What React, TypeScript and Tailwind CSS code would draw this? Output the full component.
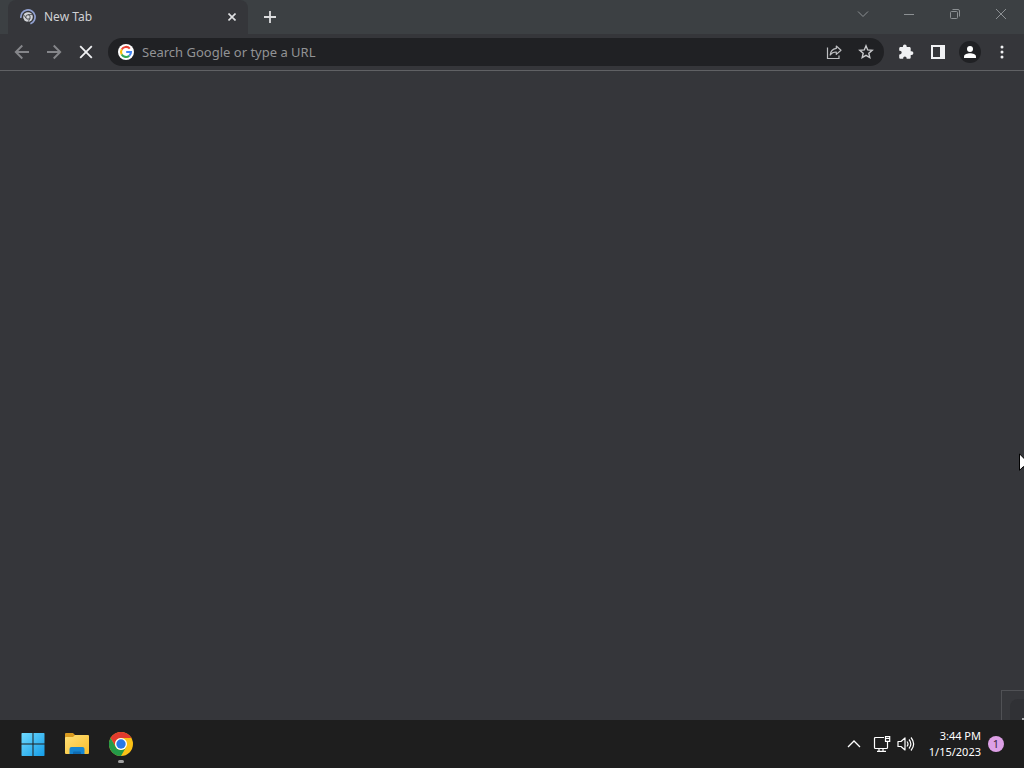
import type { ReactNode } from "react";

type IconButtonProps = { label: string; className?: string; children: ReactNode };

function IconButton({ label, className = "", children }: IconButtonProps) {
  return (
    <button type="button" aria-label={label} className={`flex shrink-0 items-center justify-center ${className}`}>
      {children}
    </button>
  );
}

function LoadingFavicon() {
  return (
    <svg width="16" height="16" viewBox="0 0 16 16" fill="none" aria-hidden="true">
      <circle cx="8" cy="8" r="4.8" fill="#d4d6da" />
      <path d="M8 5.6h4.200M5.900 9.200 3.700 5.700M10.200 9.200l-2.100 3.600" stroke="#3c3e43" strokeWidth="0.8" />
      <circle cx="8" cy="8" r="2.200" fill="#d4d6da" stroke="#3c3e43" strokeWidth="0.9" />
      <path d="M.9 8.800A7.100 7.100 0 1 1 10.400 14.700" stroke="#92a2d2" strokeWidth="1.700" />
    </svg>
  );
}

function GoogleLogo() {
  return (
    <svg width="16" height="16" viewBox="0 0 16 16" className="shrink-0" aria-hidden="true">
      <circle cx="8" cy="8" r="8" fill="#fff" />
      <g fill="none" strokeWidth="2.1">
        <path d="M11.8 4.6A5 5 0 0 0 3.7 5.5" stroke="#ea4335" />
        <path d="M3.7 5.5a5 5 0 0 0 0 5" stroke="#fbbc05" />
        <path d="M3.7 10.5a5 5 0 0 0 7.6 1.2" stroke="#34a853" />
        <path d="M11.3 11.7A5 5 0 0 0 13 8H8.2" stroke="#4285f4" />
      </g>
    </svg>
  );
}

function ChromeLogo() {
  return (
    <svg width="24" height="24" viewBox="0 0 24 24" aria-hidden="true">
      <circle cx="12" cy="12" r="12" fill="#fbc116" />
      <path d="M1.6 6A12 12 0 0 1 22.4 6H12a6 6 0 0 0-5.2 9z" fill="#e33b2e" />
      <path d="M1.6 6A12 12 0 0 0 12 24l5.2-9A6 6 0 0 1 6.8 15z" fill="#249a48" />
      <circle cx="12" cy="12" r="6" fill="#fff" />
      <circle cx="12" cy="12" r="4.7" fill="#2878e4" />
    </svg>
  );
}

function TabStrip() {
  return (
    <header className="flex h-[34px] shrink-0 bg-[#3c4043] pl-2">
      <div className="flex w-60 items-center rounded-t-lg bg-[#35363a] pr-2 pl-3">
        <LoadingFavicon />
        <span className="ml-2 flex-1 text-[12px] leading-4 text-[#cfd1d4]">New Tab</span>
        <IconButton label="Close tab" className="size-4">
          <svg width="8" height="8" viewBox="0 0 8 8" stroke="#e0e1e3" strokeWidth="1.6" aria-hidden="true">
            <path d="m.5.5 7 7m0-7-7 7" />
          </svg>
        </IconButton>
      </div>
      <IconButton label="New tab" className="ml-2 w-7">
        <svg width="12" height="12" viewBox="0 0 12 12" stroke="#dcdddf" strokeWidth="1.800" aria-hidden="true">
          <path d="M6 0v12M0 6h12" />
        </svg>
      </IconButton>
      <div className="ml-auto flex h-7 text-[#8c9093]">
        <IconButton label="Search tabs" className="w-[46px]">
          <svg width="12" height="12" viewBox="0 0 12 12" fill="none" stroke="currentColor" aria-hidden="true">
            <path d="m1 3.500 5 5 5-5" />
          </svg>
        </IconButton>
        <IconButton label="Minimize" className="w-[46px]">
          <svg width="12" height="12" viewBox="0 0 12 12" stroke="currentColor" aria-hidden="true">
            <path d="M1 6.500h10" />
          </svg>
        </IconButton>
        <IconButton label="Restore" className="w-[46px]">
          <svg width="12" height="12" viewBox="0 0 12 12" fill="none" stroke="currentColor" aria-hidden="true">
            <rect x="1.500" y="3.500" width="7" height="7" rx="1" />
            <path d="M3.500 1.500H9A1.500 1.500 0 0 1 10.500 3v5.500" />
          </svg>
        </IconButton>
        <IconButton label="Close" className="w-[46px]">
          <svg width="12" height="12" viewBox="0 0 12 12" stroke="currentColor" aria-hidden="true">
            <path d="m1 1 10 10M11 1 1 11" />
          </svg>
        </IconButton>
      </div>
    </header>
  );
}

function Toolbar() {
  return (
    <nav aria-label="Browser toolbar" className="flex h-[37px] shrink-0 items-center border-b border-[#606164] bg-[#35363a] px-[6px]">
      <IconButton label="Back" className="size-8">
        <svg width="16" height="16" viewBox="0 0 16 16" fill="none" stroke="#85868a" strokeWidth="1.900" aria-hidden="true">
          <path d="M15 8H2M8.300 1.500 1.800 8l6.500 6.500" />
        </svg>
      </IconButton>
      <IconButton label="Forward" className="size-8">
        <svg width="16" height="16" viewBox="0 0 16 16" fill="none" stroke="#85868a" strokeWidth="1.900" aria-hidden="true">
          <path d="M1 8h13M7.700 1.500 14.200 8l-6.500 6.500" />
        </svg>
      </IconButton>
      <IconButton label="Stop loading" className="size-8">
        <svg width="14" height="14" viewBox="0 0 14 14" stroke="#f1f2f4" strokeWidth="1.800" aria-hidden="true">
          <path d="m1.200 1.200 11.600 11.600M12.800 1.200 1.200 12.800" />
        </svg>
      </IconButton>
      <div className="ml-[6px] flex h-7 min-w-0 flex-1 items-center rounded-full bg-[#202124] pr-[2px] pl-[10px]">
        <GoogleLogo />
        <input
          type="text"
          aria-label="Address and search bar"
          placeholder="Search Google or type a URL"
          className="ml-2 min-w-0 flex-1 bg-transparent text-[13px] leading-5 text-white outline-none placeholder:text-[#929395]"
        />
        <IconButton label="Share this page" className="size-8">
          <svg width="16" height="16" viewBox="0 0 16 16" fill="none" stroke="#bdbec1" strokeWidth="1.200" aria-hidden="true">
            <path d="M1.500 3.500v11h11.500V11.500" />
            <path d="M10.300 2 15 6.200l-4.700 4.200V8C7.500 7.900 5.600 8.900 4.200 11c.3-3.500 2.400-6 6.100-6.600z" strokeLinejoin="round" />
          </svg>
        </IconButton>
        <IconButton label="Bookmark this tab" className="size-8">
          <svg width="16" height="16" viewBox="0 0 16 16" fill="none" stroke="#c9cacc" strokeWidth="1.400" aria-hidden="true">
            <path d="m8 1.800 1.700 4.100 4.500.4-3.400 2.900 1 4.400L8 11.300l-3.800 2.300 1-4.400-3.400-2.900 4.500-.4z" />
          </svg>
        </IconButton>
      </div>
      <IconButton label="Extensions" className="ml-[6px] size-8">
        <svg width="16" height="16" viewBox="0 0 16 16" fill="#f0f1f3" aria-hidden="true">
          <path d="M13.500 7.200h-.8V4.500c0-.8-.6-1.400-1.400-1.400H8.700v-.7a1.900 1.900 0 0 0-3.800 0v.7H2.600c-.8 0-1.400.6-1.400 1.400v2.300h.7a1.800 1.800 0 0 1 0 3.600h-.7v3c0 .8.600 1.400 1.400 1.400h2.600v-.7a1.700 1.700 0 0 1 3.400 0v.7h2.700c.8 0 1.400-.6 1.400-1.400V11h.8a1.900 1.900 0 0 0 0-3.800z" />
        </svg>
      </IconButton>
      <IconButton label="Side panel" className="size-8">
        <svg width="14" height="14" viewBox="0 0 14 14" aria-hidden="true">
          <path d="M0 0h14v14H0zM2 2v10h7V2z" fill="#f1f2f4" fillRule="evenodd" />
        </svg>
      </IconButton>
      <IconButton label="Profile" className="size-8">
        <svg width="22" height="22" viewBox="0 0 22 22" aria-hidden="true">
          <circle cx="11" cy="11" r="11" fill="#202124" />
          <circle cx="11" cy="8" r="3" fill="#fff" />
          <path d="M5 17v-1.500c0-2 3.500-3.200 6-3.200s6 1.200 6 3.200V17z" fill="#fff" />
        </svg>
      </IconButton>
      <IconButton label="Browser menu" className="size-8">
        <svg width="4" height="14" viewBox="0 0 4 14" fill="#f1f2f4" aria-hidden="true">
          <circle cx="2" cy="2" r="1.500" />
          <circle cx="2" cy="7" r="1.500" />
          <circle cx="2" cy="12" r="1.500" />
        </svg>
      </IconButton>
    </nav>
  );
}

function Taskbar() {
  return (
    <footer className="flex h-12 shrink-0 items-center bg-[#1e1e1e] pl-[11px] text-white">
      <IconButton label="Start" className="h-12 w-11">
        <svg width="24" height="24" viewBox="0 0 24 24" aria-hidden="true">
          <defs>
            <linearGradient id="start-blue" gradientUnits="userSpaceOnUse" x1="0" y1="0" x2="24" y2="24">
              <stop stopColor="#72dcff" />
              <stop offset="1" stopColor="#139ce8" />
            </linearGradient>
          </defs>
          <path d="M1 1h10.500v10.500H.5v-10zM12.500 1H23l.5.5v10h-11zM.5 12.500h11V24H1l-.5-.500zM12.500 12.500h11v11L23 24H12.500z" fill="url(#start-blue)" />
        </svg>
      </IconButton>
      <IconButton label="File Explorer" className="h-12 w-11">
        <svg width="26" height="24" viewBox="0 0 26 24" aria-hidden="true">
          <defs>
            <linearGradient id="folder-yellow" x1="0" y1="0" x2="1" y2="1">
              <stop stopColor="#ffe078" />
              <stop offset="1" stopColor="#f8bd2c" />
            </linearGradient>
          </defs>
          <path d="M1 2q0-1 1-1h7l3 3v5H1z" fill="#d99a1f" />
          <path d="M1 6q0-1 1-1h7l2-2h13q1 0 1 1v17q0 1-1 1H2q-1 0-1-1z" fill="url(#folder-yellow)" />
          <path d="M5.500 22v-5q0-2 2-2h11q2 0 2 2v5z" fill="#1686d2" />
          <path d="M9 22v-1.500q0-1 1-1h6q1 0 1 1V22z" fill="#0f6bb2" />
        </svg>
      </IconButton>
      <button type="button" aria-label="Google Chrome" className="relative flex h-12 w-11 items-center justify-center">
        <ChromeLogo />
        <span className="absolute bottom-[5px] h-[3px] w-[6px] rounded-full bg-[#a0a0a0]" />
      </button>
      <div className="ml-auto flex items-center pr-5">
        <IconButton label="Show hidden icons" className="h-12 w-8">
          <svg width="14" height="10" viewBox="0 0 14 10" fill="none" stroke="currentColor" strokeWidth="1.300" aria-hidden="true">
            <path d="m1 8 6-6 6 6" />
          </svg>
        </IconButton>
        <IconButton label="Network" className="h-12 w-6">
          <svg width="18" height="16" viewBox="0 0 18 16" fill="none" stroke="currentColor" strokeWidth="1.200" aria-hidden="true">
            <path d="M11 1.500H2.500q-1 0-1 1v9q0 1 1 1h11q1 0 1-1V6M6 12.500v3m4-3v3M4 15.400h9" />
            <path d="M12.500.6h4.200v4.800h-4.200zM12.500 2.500h4" />
          </svg>
        </IconButton>
        <IconButton label="Volume" className="mr-[11px] h-12 w-6">
          <svg width="18" height="16" viewBox="0 0 18 16" fill="none" stroke="currentColor" strokeWidth="1.200" strokeLinejoin="round" aria-hidden="true">
            <path d="M1 5.500h3L8 2v12l-4-3.500H1z" />
            <path d="M10 5.500q2 2.500 0 5M12 3.500q3.700 4.500 0 9M14 1.500q5.300 6.500 0 13" />
          </svg>
        </IconButton>
        <div className="text-right text-[11px] leading-4">
          <div>3:44 PM</div>
          <div>1/15/2023</div>
        </div>
        <button type="button" aria-label="1 new notification" className="ml-[7px] size-4 rounded-full bg-[#dda0e6] text-[11px] leading-4 text-[#3b2540]">
          1
        </button>
      </div>
    </footer>
  );
}

export default function App() {
  return (
    <div className="relative flex h-screen flex-col overflow-hidden bg-[#35363a] font-['Noto_Sans',sans-serif]">
      <TabStrip />
      <Toolbar />
      <main className="relative min-h-0 flex-1 overflow-hidden bg-[#35363a]">
        <div className="absolute right-0 bottom-0 h-[30px] w-[23px] overflow-hidden border-t border-l border-[#505155] bg-[#36373b]">
          <div className="absolute top-2 left-2 size-8 rounded-lg bg-[#303135]" />
          <span className="absolute right-0 bottom-0 size-[2px] bg-[#a8a9ab]" />
        </div>
      </main>
      <Taskbar />
      <svg width="12" height="20" viewBox="0 0 12 20" className="pointer-events-none absolute top-[453px] -right-[7px]" aria-hidden="true">
        <path d="M.5.8v16.500l4-3.800 2.600 5.500 2.500-1.200L7 12.500h5z" fill="#fff" stroke="#000" />
      </svg>
    </div>
  );
}
